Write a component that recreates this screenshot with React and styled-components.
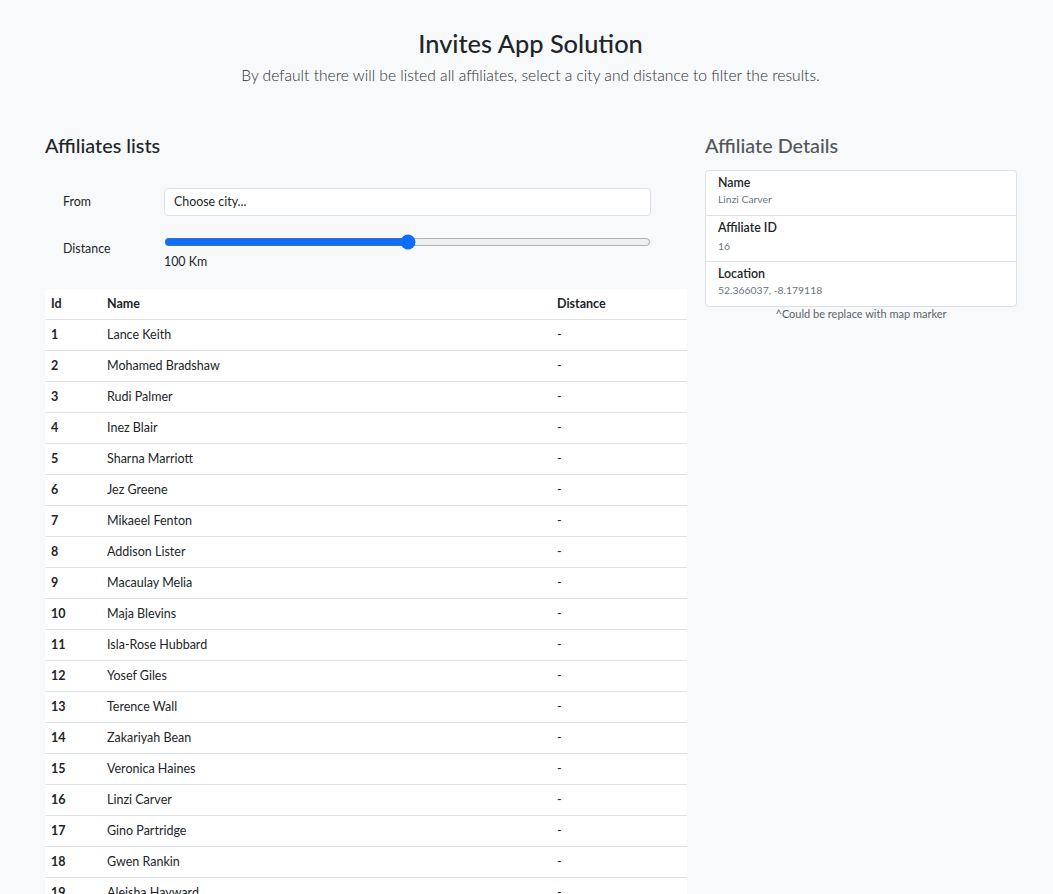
import React from "react";
import styled, { createGlobalStyle } from "styled-components";

const GlobalStyle = createGlobalStyle`
  html, body { margin: 0; padding: 0; background: #f8f9fa; }
  body {
    font-family: Lato, "Noto Sans", sans-serif;
    color: #212529;
  }
  * { box-sizing: border-box; }
`;

const Page = styled.div`
  padding: 0 0 0 8px;
  background: #f8f9fa;
  min-height: 894px;
`;

const Header = styled.header`
  text-align: center;
  padding-top: 28px;
`;

const Title = styled.h1`
  margin: 0;
  font-size: 25.4px;
  font-weight: 500;
  line-height: 30px;
`;

const Lead = styled.p`
  margin: 6px 0 0;
  font-size: 15.6px;
  font-weight: 300;
  line-height: 1.5;
  color: #2b3035;
`;

const Main = styled.div`
  display: grid;
  grid-template-columns: 642px 312px;
  column-gap: 18px;
  margin: 46px 0 0 37px;
  align-items: start;
`;

const SectionTitle = styled.h2`
  margin: 0;
  font-size: 19.8px;
  font-weight: 500;
  line-height: 25px;
  color: ${(p) => (p.$muted ? "#51565c" : "#212529")};
`;

const Form = styled.div`
  padding: 30px 36px 0 18px;
  display: flex;
  flex-direction: column;
  gap: 18px;
`;

const FormRow = styled.div`
  display: grid;
  grid-template-columns: 101px 1fr;
  align-items: start;
`;

const Label = styled.label`
  font-size: 12.4px;
  line-height: 20px;
  padding-top: ${(p) => p.$top || 0}px;
`;

const Select = styled.div`
  height: 28px;
  border: 1px solid #dee2e6;
  border-radius: 4px;
  background: #fff;
  font-size: 12.4px;
  line-height: 26px;
  padding: 0 9px;
  color: #212529;
`;

const RangeBox = styled.div`
  display: flex;
  flex-direction: column;
`;

const Range = styled.input`
  width: 100%;
  margin: 0;
  height: 16px;
  accent-color: #0d6efd;
`;

const RangeValue = styled.div`
  font-size: 12.4px;
  line-height: 20px;
  margin-top: 2px;
`;

const Table = styled.table`
  margin-top: 17px;
  width: 642px;
  border-collapse: collapse;
  background: #fff;
  font-size: 12.5px;
  table-layout: fixed;
`;

const Th = styled.th`
  text-align: left;
  font-weight: 700;
  padding: 4px 6px 5px;
  line-height: 21px;
  border-bottom: 1px solid #dee2e6;
  width: ${(p) => p.$w || "auto"};
`;

const Td = styled.td`
  padding: 4px 6px 5px;
  line-height: 21px;
  border-bottom: 1px solid #dee2e6;
  font-weight: ${(p) => (p.$bold ? 700 : 400)};
`;

const Details = styled.div`
  display: flex;
  flex-direction: column;
`;

const ListGroup = styled.ul`
  list-style: none;
  margin: 12px 0 0;
  padding: 0;
  background: #fff;
  border: 1px solid #dee2e6;
  border-radius: 4px;
`;

const ListItem = styled.li`
  padding: 4px 12px 0;
  height: ${(p) => p.$h}px;
  border-bottom: ${(p) => (p.$last ? "none" : "1px solid #dee2e6")};
`;

const ItemTitle = styled.div`
  font-size: 12.4px;
  font-weight: 600;
  line-height: 16px;
`;

const ItemValue = styled.div`
  font-size: 10.4px;
  color: #6c757d;
  line-height: 16px;
  margin-top: ${(p) => p.$gap || 0}px;
`;

const Caption = styled.div`
  text-align: center;
  font-size: 11px;
  color: #5c636a;
  line-height: 14px;
  margin-top: 0;
`;

const affiliates = [
  "Lance Keith",
  "Mohamed Bradshaw",
  "Rudi Palmer",
  "Inez Blair",
  "Sharna Marriott",
  "Jez Greene",
  "Mikaeel Fenton",
  "Addison Lister",
  "Macaulay Melia",
  "Maja Blevins",
  "Isla-Rose Hubbard",
  "Yosef Giles",
  "Terence Wall",
  "Zakariyah Bean",
  "Veronica Haines",
  "Linzi Carver",
  "Gino Partridge",
  "Gwen Rankin",
  "Aleisha Hayward",
  "Ellena Rose",
];

export default function App() {
  return (
    <Page>
      <GlobalStyle />
      <Header>
        <Title>Invites App Solution</Title>
        <Lead>
          By default there will be listed all affiliates, select a city and
          distance to filter the results.
        </Lead>
      </Header>
      <Main>
        <div>
          <SectionTitle>Affiliates lists</SectionTitle>
          <Form>
            <FormRow>
              <Label $top={4}>From</Label>
              <Select>Choose city...</Select>
            </FormRow>
            <FormRow>
              <Label $top={5}>Distance</Label>
              <RangeBox>
                <Range type="range" min={0} max={200} defaultValue={100} />
                <RangeValue>100 Km</RangeValue>
              </RangeBox>
            </FormRow>
          </Form>
          <Table>
            <thead>
              <tr>
                <Th $w="56px">Id</Th>
                <Th $w="450px">Name</Th>
                <Th>Distance</Th>
              </tr>
            </thead>
            <tbody>
              {affiliates.map((name, i) => (
                <tr key={name}>
                  <Td $bold>{i + 1}</Td>
                  <Td>{name}</Td>
                  <Td>-</Td>
                </tr>
              ))}
            </tbody>
          </Table>
        </div>
        <Details>
          <SectionTitle $muted>Affiliate Details</SectionTitle>
          <ListGroup>
            <ListItem $h={45}>
              <ItemTitle>Name</ItemTitle>
              <ItemValue>Linzi Carver</ItemValue>
            </ListItem>
            <ListItem $h={46}>
              <ItemTitle>Affiliate ID</ItemTitle>
              <ItemValue $gap={2}>16</ItemValue>
            </ListItem>
            <ListItem $h={44} $last>
              <ItemTitle>Location</ItemTitle>
              <ItemValue>52.366037, -8.179118</ItemValue>
            </ListItem>
          </ListGroup>
          <Caption>^Could be replace with map marker</Caption>
        </Details>
      </Main>
    </Page>
  );
}
